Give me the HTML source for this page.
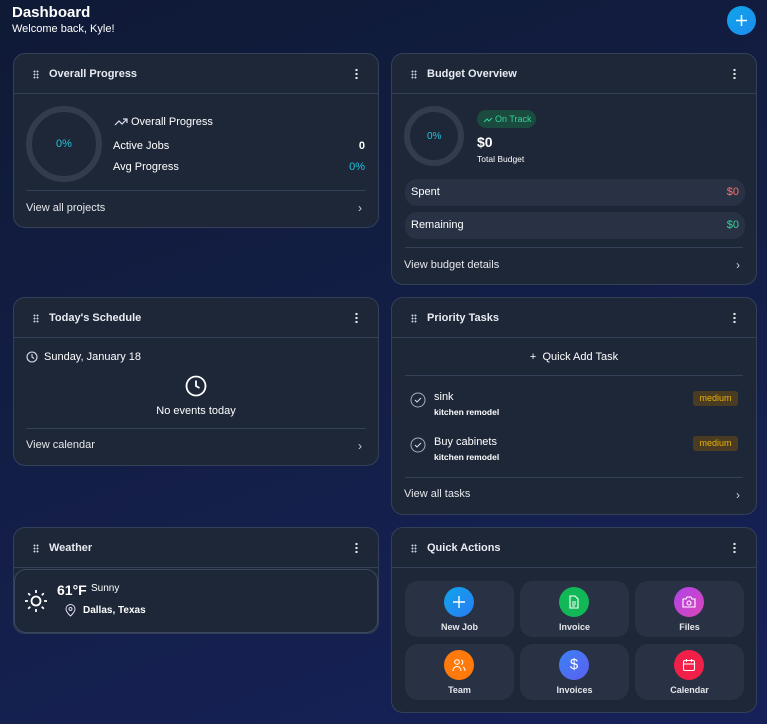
<!DOCTYPE html>
<html><head><meta charset="utf-8"><style>
*{box-sizing:border-box;margin:0;padding:0}
body{width:767px;height:724px;overflow:hidden;background:linear-gradient(160deg,#0f1a36 0%,#141f4a 60%,#16215a 100%);font-family:"Liberation Sans",sans-serif;color:#fff;position:relative;font-size:11px}
.a{position:absolute}
.card{position:absolute;background:#1e2738;border:1px solid #334058;border-radius:12px}
.hd{position:absolute;left:0;right:0;top:0;height:40px;border-bottom:1px solid #334058}
.hd .t{position:absolute;left:35px;top:14px;font-size:11px;font-weight:bold;color:#e8ecf2}
.grip{position:absolute;left:19px;top:16px;width:6px;height:9px;background-image:radial-gradient(circle,#cbd2dc 0.9px,transparent 1.1px);background-size:3px 3px}
.dots{position:absolute;right:20px;top:14px;width:3px;height:11px;background-image:radial-gradient(circle,#e5e7eb 1.1px,transparent 1.3px);background-size:3px 4px}
.sep{position:absolute;height:1px;background:#334058}
.foot{position:absolute;font-size:11px;color:#e5e7eb}
.chev{position:absolute;font-size:12px;color:#cbd2dc}
.ring{position:absolute;border-radius:50%;border:6px solid #323c4d}
.pill{position:absolute;background:#283244;border-radius:12px}
.qa{position:absolute;width:109px;height:56px;background:#283244;border-radius:13px}
.qa .c{position:absolute;left:39px;top:6px;width:30px;height:30px;border-radius:50%}
.qa .l{position:absolute;left:0;right:0;top:41px;text-align:center;font-size:9px;font-weight:bold;color:#e5e7eb}
.qa svg{position:absolute;left:8px;top:8px}
.med{position:absolute;right:18px;width:45px;height:15px;background:#4a3c22;border-radius:3px;color:#eab308;font-size:9px;text-align:center;line-height:15px}
</style></head><body>
<div class="a" style="left:12px;top:4px;font-size:15px;font-weight:bold">Dashboard</div>
<div class="a" style="left:12px;top:23px;font-size:11px">Welcome back, Kyle!</div>
<div class="a" style="left:727px;top:6px;width:29px;height:29px;border-radius:50%;background:linear-gradient(135deg,#0ea5e9,#1d8cf0)"><svg width="29" height="29"><path d="M14.5 9v11M9 14.5h11" stroke="#fff" stroke-width="1.5"/></svg></div>

<!-- Overall Progress -->
<div class="card" style="left:13px;top:53px;width:366px;height:175px">
<div class="hd"><div class="grip"></div><div class="t">Overall Progress</div><div class="dots"></div></div>
<div class="ring" style="left:12px;top:52px;width:76px;height:76px"></div>
<div class="a" style="left:42px;top:84px;color:#22c2dc;font-size:11px">0%</div>
<svg class="a" style="left:100px;top:63px" width="14" height="10"><path d="M1 8l4-4 3 3 5-5M9 2h4v4" stroke="#dde" fill="none" stroke-width="1.2"/></svg>
<div class="a" style="left:117px;top:62px;font-size:11px">Overall Progress</div>
<div class="a" style="left:99px;top:86px">Active Jobs</div>
<div class="a" style="right:13px;top:86px;font-weight:bold">0</div>
<div class="a" style="left:99px;top:107px">Avg Progress</div>
<div class="a" style="right:13px;top:107px;color:#22c2dc">0%</div>
<div class="sep" style="left:12px;right:12px;top:136px"></div>
<div class="foot" style="left:12px;top:148px">View all projects</div><div class="chev" style="right:16px;top:147px">›</div>
</div>

<!-- Budget -->
<div class="card" style="left:391px;top:53px;width:366px;height:232px">
<div class="hd"><div class="grip"></div><div class="t">Budget Overview</div><div class="dots"></div></div>
<div class="ring" style="left:12px;top:52px;width:60px;height:60px"></div>
<div class="a" style="left:35px;top:77px;color:#22c2dc;font-size:10px">0%</div>
<div class="a" style="left:85px;top:56px;width:59px;height:18px;background:#1b4a3e;border-radius:9px;color:#34d399;font-size:9px;line-height:18px;padding-left:18px">On Track</div>
<svg class="a" style="left:91px;top:62px" width="10" height="7"><path d="M1 6l3-3 2 2 3-3" stroke="#34d399" fill="none" stroke-width="1"/></svg>
<div class="a" style="left:85px;top:80px;font-size:14px;font-weight:bold">$0</div>
<div class="a" style="left:85px;top:100px;font-size:8.5px">Total Budget</div>
<div class="pill" style="left:13px;top:125px;width:340px;height:27px"><div class="a" style="left:6px;top:7px">Spent</div><div class="a" style="right:6px;top:7px;color:#f87171">$0</div></div>
<div class="pill" style="left:13px;top:158px;width:340px;height:27px"><div class="a" style="left:6px;top:7px">Remaining</div><div class="a" style="right:6px;top:7px;color:#34d399">$0</div></div>
<div class="sep" style="left:13px;right:13px;top:193px"></div>
<div class="foot" style="left:12px;top:205px">View budget details</div><div class="chev" style="right:16px;top:204px">›</div>
</div>

<!-- Schedule -->
<div class="card" style="left:13px;top:297px;width:366px;height:169px">
<div class="hd"><div class="grip"></div><div class="t">Today's Schedule</div><div class="dots"></div></div>
<svg class="a" style="left:12px;top:53px" width="12" height="12"><circle cx="6" cy="6" r="5" stroke="#dde" fill="none" stroke-width="1.1"/><path d="M6 3v3l2 1.5" stroke="#dde" fill="none" stroke-width="1.1"/></svg>
<div class="a" style="left:30px;top:53px">Sunday, January 18</div>
<svg class="a" style="left:171px;top:77px" width="22" height="22"><circle cx="11" cy="11" r="9.5" stroke="#fff" fill="none" stroke-width="1.8"/><path d="M11 5.5v5.5l3.5 2" stroke="#fff" fill="none" stroke-width="1.8"/></svg>
<div class="a" style="left:0;right:0;top:107px;text-align:center">No events today</div>
<div class="sep" style="left:12px;right:12px;top:130px"></div>
<div class="foot" style="left:12px;top:141px">View calendar</div><div class="chev" style="right:16px;top:141px">›</div>
</div>

<!-- Priority Tasks -->
<div class="card" style="left:391px;top:297px;width:366px;height:218px">
<div class="hd"><div class="grip"></div><div class="t">Priority Tasks</div><div class="dots"></div></div>
<div class="a" style="left:0;right:0;top:53px;text-align:center;font-size:11px">+&nbsp;&nbsp;Quick Add Task</div>
<div class="sep" style="left:13px;right:13px;top:77px"></div>
<svg class="a" style="left:18px;top:94px" width="16" height="16"><circle cx="8" cy="8" r="7" stroke="#aab" fill="none" stroke-width="1"/><path d="M5 8l2 2 4-4" stroke="#dde" fill="none" stroke-width="1"/></svg>
<div class="a" style="left:42px;top:93px;font-size:11px">sink</div>
<div class="a" style="left:42px;top:109px;font-size:8.5px;font-weight:bold">kitchen remodel</div>
<div class="med" style="top:93px">medium</div>
<svg class="a" style="left:18px;top:139px" width="16" height="16"><circle cx="8" cy="8" r="7" stroke="#aab" fill="none" stroke-width="1"/><path d="M5 8l2 2 4-4" stroke="#dde" fill="none" stroke-width="1"/></svg>
<div class="a" style="left:42px;top:138px;font-size:11px">Buy cabinets</div>
<div class="a" style="left:42px;top:154px;font-size:8.5px;font-weight:bold">kitchen remodel</div>
<div class="med" style="top:138px">medium</div>
<div class="sep" style="left:13px;right:13px;top:179px"></div>
<div class="foot" style="left:12px;top:190px">View all tasks</div><div class="chev" style="right:16px;top:190px">›</div>
</div>

<!-- Weather -->
<div class="card" style="left:13px;top:527px;width:366px;height:107px">
<div class="hd"><div class="grip"></div><div class="t">Weather</div><div class="dots"></div></div>
<div class="a" style="left:0px;top:41px;width:364px;height:64px;border:1px solid #3a475e;border-radius:12px;background:#1e2738"></div>
<svg class="a" style="left:10px;top:61px" width="24" height="24"><circle cx="12" cy="12" r="4.5" stroke="#fff" fill="none" stroke-width="1.8"/><path d="M12 1v3M12 20v3M1 12h3M20 12h3M4.2 4.2l2 2M17.8 17.8l2 2M4.2 19.8l2-2M17.8 6.2l2-2" stroke="#fff" stroke-width="1.8"/></svg>
<div class="a" style="left:43px;top:54px;font-size:14px;font-weight:bold">61°F</div>
<div class="a" style="left:77px;top:55px;font-size:10px">Sunny</div>
<svg class="a" style="left:51px;top:76px" width="11" height="13"><path d="M5.5 12s4.5-4 4.5-7a4.5 4.5 0 0 0-9 0c0 3 4.5 7 4.5 7z" stroke="#dde" fill="none" stroke-width="1"/><circle cx="5.5" cy="5" r="1.5" stroke="#dde" fill="none"/></svg>
<div class="a" style="left:69px;top:77px;font-size:10px;font-weight:bold">Dallas, Texas</div>
</div>

<!-- Quick Actions -->
<div class="card" style="left:391px;top:527px;width:366px;height:186px">
<div class="hd"><div class="grip"></div><div class="t">Quick Actions</div><div class="dots"></div></div>
<div class="qa" style="left:13px;top:53px"><div class="c" style="background:linear-gradient(135deg,#0ea5e9,#2b7cf5)"><svg width="14" height="14"><path d="M7 1v12M1 7h12" stroke="#fff" stroke-width="1.4"/></svg></div><div class="l">New Job</div></div>
<div class="qa" style="left:128px;top:53px"><div class="c" style="background:#12b858"><svg width="14" height="14"><path d="M3 1h5l3 3v9H3z M5 7h4M5 9h4M5 11h3" stroke="#fff" fill="none" stroke-width="1.1"/></svg></div><div class="l">Invoice</div></div>
<div class="qa" style="left:243px;top:53px"><div class="c" style="background:linear-gradient(135deg,#b043e8,#d946b9)"><svg width="14" height="14"><path d="M1 4h3l1-2h4l1 2h3v8H1z" stroke="#fff" fill="none" stroke-width="1.1"/><circle cx="7" cy="8" r="2" stroke="#fff" fill="none" stroke-width="1.1"/></svg></div><div class="l">Files</div></div>
<div class="qa" style="left:13px;top:116px"><div class="c" style="background:#ff7a0a"><svg width="14" height="14"><circle cx="5" cy="4" r="2.3" stroke="#fff" fill="none"/><path d="M1 13c0-3 2-4.5 4-4.5s4 1.5 4 4.5M9 2a2.3 2.3 0 0 1 0 4.5M11 9c1.3.6 2 2 2 4" stroke="#fff" fill="none"/></svg></div><div class="l">Team</div></div>
<div class="qa" style="left:128px;top:116px"><div class="c" style="background:linear-gradient(135deg,#3b82f6,#5b5ff0)"><div class="a" style="left:0;right:0;top:6px;text-align:center;font-size:15px;color:#fff">$</div></div><div class="l">Invoices</div></div>
<div class="qa" style="left:243px;top:116px"><div class="c" style="background:#f21f48"><svg width="14" height="14"><rect x="1.5" y="2.5" width="11" height="10" rx="1.5" stroke="#fff" fill="none" stroke-width="1.1"/><path d="M1.5 6h11M4.5 1v3M9.5 1v3" stroke="#fff" stroke-width="1.1"/></svg></div><div class="l">Calendar</div></div>
</div>
</body></html>
